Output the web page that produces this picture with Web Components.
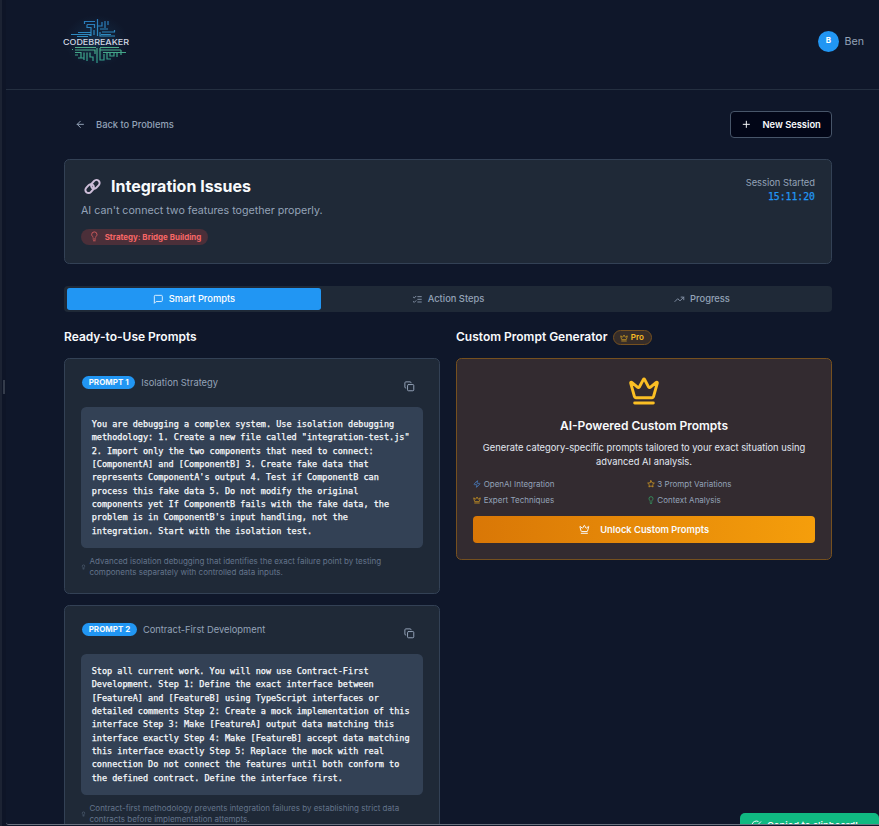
<!DOCTYPE html>
<html lang="en">
<head>
<meta charset="utf-8">
<title>Codebreaker</title>
<style>
html,body{margin:0;height:826px;overflow:hidden;background:#0f172a}
body{font-family:Inter,"Liberation Sans",sans-serif;font-size:9.33px;line-height:13.33px;color:#f8fafc}
</style>
</head>
<body>
<cb-app></cb-app>
<script>
const ICONS = {
  back:'<path d="m12 19-7-7 7-7M19 12H5"/>',
  plus:'<path d="M5 12h14M12 5v14"/>',
  bulb:'<path d="M15 14c.2-1 .7-1.7 1.5-2.5 1-.9 1.5-2.2 1.5-3.5A6 6 0 0 0 6 8c0 1 .2 2.200 1.500 3.500.7.7 1.300 1.500 1.500 2.500M9 18h6M10 22h4"/>',
  chat:'<path d="M21 15a2 2 0 0 1-2 2H7l-4 4V5a2 2 0 0 1 2-2h14a2 2 0 0 1 2 2z"/>',
  list:'<path d="m3 17 2 2 4-4M3 7l2 2 4-4M13 6h8M13 12h8M13 18h8"/>',
  trend:'<path d="m22 7-8.5 8.5-5-5L2 17M16 7h6v6"/>',
  copy:'<rect width="14" height="14" x="8" y="8" rx="2"/><path d="M4 16c-1.1 0-2-.9-2-2V4c0-1.1.9-2 2-2h10c1.1 0 2 .9 2 2"/>',
  crown:'<path d="M11.56 3.27a.5.5 0 0 1 .88 0L15.39 8.87a1 1 0 0 0 1.52.3L21.18 5.5a.5.5 0 0 1 .8.52l-2.84 10.25a1 1 0 0 1-.95.73H5.81a1 1 0 0 1-.96-.73L2.02 6.02a.5.5 0 0 1 .8-.52l4.28 3.66a1 1 0 0 0 1.51-.29zM5 21h14"/>',
  zap:'<path d="M4 14a1 1 0 0 1-.78-1.63l9.9-10.2a.5.5 0 0 1 .86.46l-1.92 6.02A1 1 0 0 0 13 10h7a1 1 0 0 1 .78 1.63l-9.9 10.2a.5.5 0 0 1-.86-.46l1.92-6.02A1 1 0 0 0 11 14z"/>',
  star:'<path d="m12 2 3.1 6.3 6.9 1-5 4.9 1.2 6.8-6.2-3.2L5.8 21 7 14.200 2 9.300l6.900-1z"/>',
  check:'<path d="M22 11v1a10 10 0 1 1-6-9M22 4 12 14l-3-3"/>',
  link:'<g stroke-width="3.200"><rect x="-.3" y="10.500" width="15.500" height="10" rx="5" transform="rotate(-48 7.450 15.500)"/><rect x="8.800" y="3.500" width="15.500" height="10" rx="5" transform="rotate(-48 16.550 8.500)"/></g>'
};
function define(name, html, init){
  customElements.define(name, class extends HTMLElement{
    constructor(){
      super();
      const t=document.createElement('template');
      t.innerHTML=html;
      this.attachShadow({mode:'open'}).append(t.content.cloneNode(true));
    }
    connectedCallback(){ if(init) init(this,this.shadowRoot); }
  });
}

define('cb-icon','<style>:host{display:inline-flex;flex:none;width:10.67px;height:10.67px}svg{width:100%;height:100%;display:block;overflow:visible}</style><svg viewBox="0 0 24 24" fill="none" stroke="currentColor" stroke-width="2.2" stroke-linecap="round" stroke-linejoin="round"></svg>',
(el,r)=>{ r.querySelector('svg').innerHTML=ICONS[el.getAttribute('name')]||''; });

define('cb-logo',`<style>:host{display:block;width:72px;height:54px}svg{display:block;overflow:visible}text{font-family:Inter,sans-serif;font-size:7.800px;font-weight:500;fill:#d3d8e3}</style>
<svg width="72" height="54" viewBox="0 0 72 54">
<defs><linearGradient id="g" gradientUnits="userSpaceOnUse" x1="0" y1="4" x2="0" y2="50"><stop offset="0" stop-color="#2877b8"/><stop offset=".4" stop-color="#2e8cc0"/><stop offset=".62" stop-color="#4fae87"/><stop offset="1" stop-color="#2d9a8d"/></linearGradient>
<radialGradient id="h"><stop offset="0" stop-color="#1b4566" stop-opacity=".45"/><stop offset="1" stop-color="#1b4566" stop-opacity="0"/></radialGradient></defs>
<ellipse cx="35" cy="27" rx="32" ry="26" fill="url(#h)"/>
<g fill="none" stroke="url(#g)" stroke-width="1.200">
<path d="M36.500 5V22M23.500 10V7.500H34M26 10.500H33.500V14M26 10.500V13.500H30V18.500H17M33 16V21M36.500 12H41V8M39 15H47M44 7V14M47 7V11M41 18H54M53.500 16V18M39 18V22H54M10 20.500H29V22M16 22.500H27M30 18V22M40 20.500H50"/>
<path d="M14 33.500H35M39 33.500H58M14 36H34V40M39 36H60M39 34V42M14 38.500H20V44M14 41H17M23 38.500V46M26 38.500V47M29 38.500V43H32V47M36 34V49M39 42V46H43V40M46 38.500V45H50M49 38.500V42H53V38.500M42 38.500H65M56 38.500V43M60 36V41M17 44H23"/>
<path d="M11 35.500h1"/></g>
<text x="2" y="30.500" textLength="66" lengthAdjust="spacingAndGlyphs">CODEBREAKER</text></svg>`);

define('cb-header',`<style>:host{display:flex;box-sizing:border-box;height:90px;padding:14px 15px 0 55px;border-bottom:1px solid #242f40;justify-content:space-between;align-items:flex-start}
.u{display:flex;align-items:center;gap:5.500px;color:#94a3b8;font-size:10.670px;height:54px}.u span:last-child{padding-top:2px}.a{width:21px;height:21px;border-radius:50%;background:#2196f3;color:#fff;font-weight:700;font-size:8px;display:flex;align-items:center;justify-content:center}</style>
<cb-logo></cb-logo><div class="u"><span class="a">B</span><span><slot></slot></span></div>`);

define('cb-toolbar',`<style>:host{display:flex;justify-content:space-between;align-items:center;height:27px}
.b{display:flex;align-items:center;gap:10.700px;padding-left:10.700px;color:#94a3b8;font-weight:500}
.n{display:flex;box-sizing:border-box;width:102px;height:27px;align-items:center;justify-content:center;gap:10.700px;background:#020617;border:1px solid #475569;border-radius:4px;font-weight:600}</style>
<div class="b"><cb-icon name="back"></cb-icon><span>Back to Problems</span></div><div class="n"><cb-icon name="plus"></cb-icon><span>New Session</span></div>`);

define('cb-session',`<style>:host{display:flex;box-sizing:border-box;height:105px;margin-top:21px;padding:16px;background:#1f2937;border:1px solid #334155;border-radius:5.300px;justify-content:space-between}
.t{display:flex;align-items:center;height:21px}.t cb-icon{width:15px;height:15px;color:#cdbdd8;margin:0 11.500px 0 3.500px}h1{margin:0;font-size:16px;line-height:21px;font-weight:700}
p{margin:6px 0 0;color:#94a3b8;font-size:10.670px;line-height:16px}.s{display:inline-flex;align-items:center;margin-top:9.700px;height:16px;border-radius:8px;background:#4b2f39;color:#f86767;font-size:7.950px;font-weight:700;padding:0 6.500px 0 8px;gap:5px;line-height:16px}.s cb-icon{width:10.670px;height:10.670px;opacity:.75}
.r{text-align:right;color:#94a3b8;line-height:13.330px}.m{font-family:"DejaVu Sans Mono",monospace;font-size:9.780px;color:#2196f3;margin-top:1px;-webkit-text-stroke:.25px #2196f3}</style>
<div><div class="t"><cb-icon name="link"></cb-icon><h1>Integration Issues</h1></div><p>AI can't connect two features together properly.</p><div class="s"><cb-icon name="bulb"></cb-icon><span>Strategy: Bridge Building</span></div></div>
<div class="r"><div>Session Started</div><div class="m">15:11:20</div></div>`);

define('cb-tabs',`<style>:host{display:grid;grid-template-columns:repeat(3,1fr);box-sizing:border-box;height:26px;margin-top:22px;padding:2px 3px;background:#1f2937;border-radius:4px}</style><slot></slot>`);
define('cb-tab',`<style>:host{display:flex;align-items:center;justify-content:center;gap:5.300px;font-weight:500;color:#94a3b8;border-radius:2.700px}:host([active]){background:#2196f3;color:#fff}cb-icon{opacity:.85}</style><cb-icon></cb-icon><span><slot></slot></span>`,
(el,r)=>{const i=r.querySelector('cb-icon');i.setAttribute('name',el.getAttribute('icon'));i.connectedCallback();});

define('cb-prompt',`<style>:host{display:block;box-sizing:border-box;height:236px;padding:16px;background:#1f2937;border:1px solid #334155;border-radius:5.300px}
.h{display:flex;align-items:flex-start;height:32px}.p{background:#2196f3;border-radius:7px;height:13px;line-height:13px;padding:0 6.700px;margin:.5px 6px 0 1px;font-size:8px;font-weight:700}.n{color:#94a3b8;line-height:14.500px;padding-top:1px}.h cb-icon{margin:6px 8.500px 0 auto;color:#94a3b8}
.c{box-sizing:border-box;height:141px;padding:11px 10.670px;background:#334155;border-radius:5.300px;font-family:"DejaVu Sans Mono",monospace;font-size:8.525px;line-height:13.330px;color:#f8fafc;white-space:nowrap;-webkit-text-stroke:.25px #f8fafc}
.d{display:flex;align-items:center;gap:3.500px;margin-top:8px;color:#64748b;font-size:8px;line-height:10.700px;white-space:nowrap}.d cb-icon{width:5px;height:8px}</style>
<div class="h"><span class="p"><slot name="tag"></slot></span><span class="n"><slot name="name"></slot></span><cb-icon name="copy"></cb-icon></div><div class="c"><slot></slot></div><div class="d"><cb-icon name="bulb"></cb-icon><span><slot name="note"></slot></span></div>`);

define('cb-pro',`<style>:host{display:block;box-sizing:border-box;height:202px;padding:16px;background:#332b30;border:1px solid #75501f;border-radius:5.300px;text-align:center}
.k{width:32px;height:32px;color:#fbbf24;display:block;margin:0 auto}h3{margin:9.500px 0 0;font-size:12px;line-height:18px;font-weight:600}p{margin:6px 0 0;line-height:14px;color:#e2e8f0}
.f{display:grid;grid-template-columns:1fr 1fr;column-gap:5.300px;row-gap:5.300px;margin-top:10.500px;font-size:8px;line-height:10.670px;color:#94a3b8}.f div{display:flex;align-items:center;gap:2.700px}.f cb-icon{width:8px;height:8px}
.u{display:flex;align-items:center;justify-content:center;gap:10.700px;height:27px;margin-top:10.500px;border-radius:4px;background:linear-gradient(90deg,#d97706,#f59e0b);font-weight:600}</style>
<cb-icon class="k" name="crown"></cb-icon><h3>AI-Powered Custom Prompts</h3><p>Generate category-specific prompts tailored to your exact situation using<br>advanced AI analysis.</p>
<div class="f"><div><cb-icon name="zap" style="color:#4a83cc"></cb-icon><span>OpenAI Integration</span></div><div><cb-icon name="star" style="color:#d79e22"></cb-icon><span>3 Prompt Variations</span></div><div><cb-icon name="crown" style="color:#d79e22"></cb-icon><span>Expert Techniques</span></div><div><cb-icon name="bulb" style="color:#37a968"></cb-icon><span>Context Analysis</span></div></div>
<div class="u"><cb-icon name="crown"></cb-icon><span>Unlock Custom Prompts</span></div>`);

define('cb-heading',`<style>:host{display:flex;align-items:center;height:18px;gap:6px;margin-bottom:12px}h2{margin:0;font-size:12px;line-height:18px;font-weight:600}</style><h2><slot></slot></h2><slot name="badge"></slot>`);
define('cb-badge',`<style>:host{display:flex;box-sizing:border-box;width:39px;height:15px;margin-top:1px;align-items:center;justify-content:center;gap:2.700px;padding-right:2px;border:1px solid #75501f;border-radius:8px;background:#362d29;color:#fbbf24;font-size:8px;line-height:13px;font-weight:600}cb-icon{width:8px;height:8px;opacity:.8}</style><cb-icon name="crown"></cb-icon><span><slot></slot></span>`);
define('cb-toast',`<style>:host{position:absolute;right:0;top:813px;width:139px;height:11px;box-sizing:border-box;overflow:hidden;background:#10b981;border-radius:5px 5px 0 0}div{display:flex;align-items:center;gap:5.300px;padding:6px 0 0 11px;font-size:9.330px;line-height:13.330px;font-weight:600;white-space:nowrap}</style><div><cb-icon name="check"></cb-icon><span>Copied to clipboard!</span></div>`);

define('cb-app',`<style>:host{display:flex;height:826px;position:relative;overflow:hidden;background:#0f172a}
.rail{width:2px;background:#1c2333;flex:none}.gap{width:4px;flex:none;background:#0e1527;display:flex;align-items:center}.grip{width:2px;height:14px;margin:-52px 0 0 1px;background:#343c4b}
.frame{flex:1;box-sizing:border-box;height:825px;overflow:hidden;border-bottom:1px solid #6b7280;border-radius:0 0 0 3px}
main{padding:21px 47px 0 58px}.cols{display:grid;grid-template-columns:1fr 1fr;gap:16px;margin-top:16px}.stack{display:flex;flex-direction:column}cb-prompt+cb-prompt{margin-top:11px}</style>
<div class="rail"></div><div class="gap"><div class="grip"></div></div>
<div class="frame"><cb-header>Ben</cb-header><main><cb-toolbar></cb-toolbar><cb-session></cb-session>
<cb-tabs><cb-tab icon="chat" active>Smart Prompts</cb-tab><cb-tab icon="list">Action Steps</cb-tab><cb-tab icon="trend">Progress</cb-tab></cb-tabs>
<div class="cols"><div class="stack"><cb-heading>Ready-to-Use Prompts</cb-heading>
<cb-prompt><span slot="tag">PROMPT 1</span><span slot="name">Isolation Strategy</span>You are debugging a complex system. Use isolation debugging<br>methodology: 1. Create a new file called "integration-test.js"<br>2. Import only the two components that need to connect:<br>[ComponentA] and [ComponentB] 3. Create fake data that<br>represents ComponentA's output 4. Test if ComponentB can<br>process this fake data 5. Do not modify the original<br>components yet If ComponentB fails with the fake data, the<br>problem is in ComponentB's input handling, not the<br>integration. Start with the isolation test.<span slot="note">Advanced isolation debugging that identifies the exact failure point by testing<br>components separately with controlled data inputs.</span></cb-prompt>
<cb-prompt><span slot="tag">PROMPT 2</span><span slot="name">Contract-First Development</span>Stop all current work. You will now use Contract-First<br>Development. Step 1: Define the exact interface between<br>[FeatureA] and [FeatureB] using TypeScript interfaces or<br>detailed comments Step 2: Create a mock implementation of this<br>interface Step 3: Make [FeatureA] output data matching this<br>interface exactly Step 4: Make [FeatureB] accept data matching<br>this interface exactly Step 5: Replace the mock with real<br>connection Do not connect the features until both conform to<br>the defined contract. Define the interface first.<span slot="note">Contract-first methodology prevents integration failures by establishing strict data<br>contracts before implementation attempts.</span></cb-prompt></div>
<div class="stack"><cb-heading>Custom Prompt Generator<cb-badge slot="badge">Pro</cb-badge></cb-heading><cb-pro></cb-pro></div></div></main></div><cb-toast></cb-toast>`);
</script>
</body>
</html>
